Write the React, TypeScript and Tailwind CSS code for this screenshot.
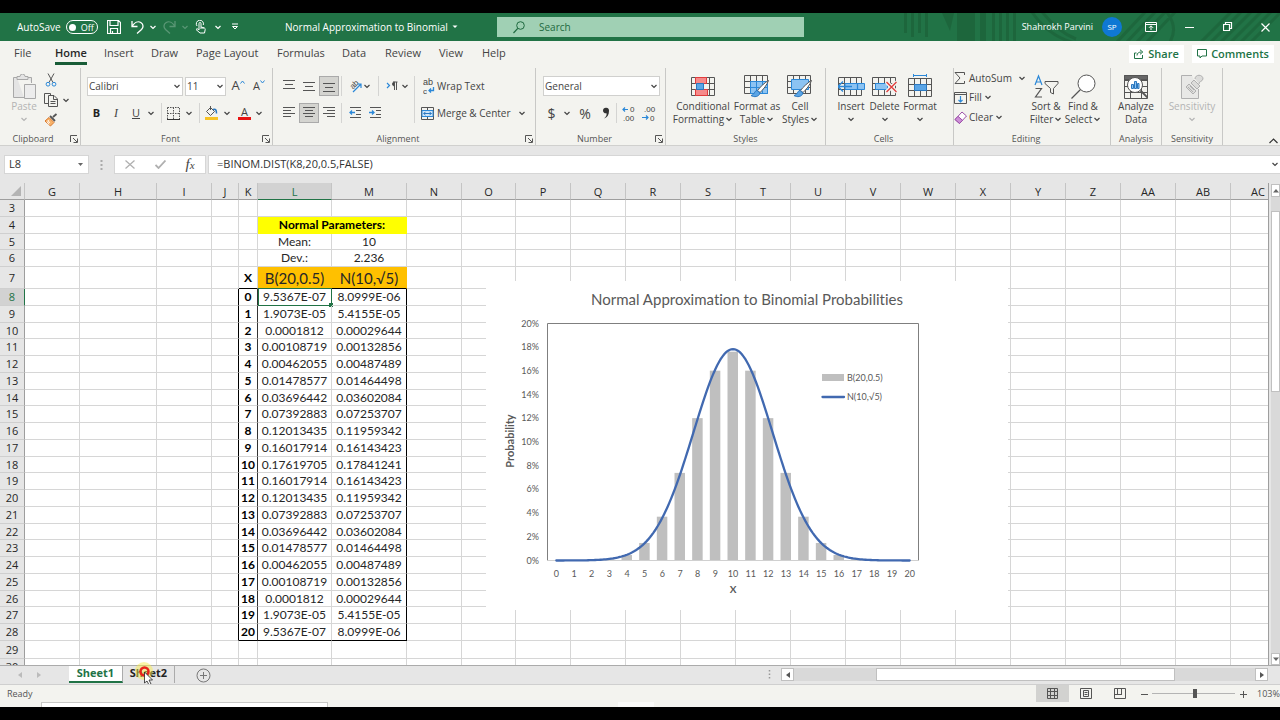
import React from "react";

/* ---------- data ---------- */

const COLUMNS: { name: string; width: string }[] = [
  { name: "G", width: "w-[55px]" },
  { name: "H", width: "w-[77px]" },
  { name: "I", width: "w-[55px]" },
  { name: "J", width: "w-[27px]" },
  { name: "K", width: "w-[19px]" },
  { name: "L", width: "w-[74px]" },
  { name: "M", width: "w-[75px]" },
  { name: "N", width: "w-[55px]" },
  { name: "O", width: "w-[54px]" },
  { name: "P", width: "w-[55px]" },
  { name: "Q", width: "w-[55px]" },
  { name: "R", width: "w-[55px]" },
  { name: "S", width: "w-[55px]" },
  { name: "T", width: "w-[55px]" },
  { name: "U", width: "w-[55px]" },
  { name: "V", width: "w-[55px]" },
  { name: "W", width: "w-[55px]" },
  { name: "X", width: "w-[55px]" },
  { name: "Y", width: "w-[55px]" },
  { name: "Z", width: "w-[55px]" },
  { name: "AA", width: "w-[55px]" },
  { name: "AB", width: "w-[55px]" },
  { name: "AC", width: "w-[55px]" },
];

const PAIRS: [string, string][] = [
  ["9.5367E-07", "8.0999E-06"],
  ["1.9073E-05", "5.4155E-05"],
  ["0.0001812", "0.00029644"],
  ["0.00108719", "0.00132856"],
  ["0.00462055", "0.00487489"],
  ["0.01478577", "0.01464498"],
  ["0.03696442", "0.03602084"],
  ["0.07392883", "0.07253707"],
  ["0.12013435", "0.11959342"],
  ["0.16017914", "0.16143423"],
  ["0.17619705", "0.17841241"],
];

const ROWS = Array.from({ length: 28 }, (_, i) => i + 3);

function rowHeight(r: number) {
  if (r === 7) return "h-[22px]";
  if (r === 29) return "h-[18px]";
  if (r === 5 || (r > 8 && r % 4 === 2)) return "h-[16px]";
  return "h-[17px]";
}

function cellValue(r: number, c: string): string {
  if (r === 5) return c === "L" ? "Mean:" : c === "M" ? "10" : "";
  if (r === 6) return c === "L" ? "Dev.:" : c === "M" ? "2.236" : "";
  if (r === 7) return c === "K" ? "X" : c === "L" ? "B(20,0.5)" : c === "M" ? "N(10,√5)" : "";
  if (r >= 8 && r <= 28) {
    const k = r - 8;
    const pair = PAIRS[k <= 10 ? k : 20 - k];
    return c === "K" ? String(k) : c === "L" ? pair[0] : c === "M" ? pair[1] : "";
  }
  return "";
}

function cellStyle(r: number, c: string): string {
  const inBox = r >= 8 && r <= 28;
  let right = "border-r border-r-[#d6d6d6]";
  let bottom = "border-b border-b-[#d6d6d6]";
  let extra = "";
  if (inBox && (c === "J" || c === "M")) right = "border-r border-r-black";
  if (inBox && c === "K") right = "border-r border-r-[#333]";
  if ((r === 28 || r === 7) && (c === "K" || c === "L" || c === "M")) bottom = "border-b border-b-black";
  if (c === "K") extra = "font-bold text-black";
  if (r === 7 && (c === "L" || c === "M")) {
    extra = "bg-[#ffc000] text-[15px]";
    right = "border-r border-r-[#ffc000]";
  }
  return right + " " + bottom + " " + extra;
}

/* ---------- small pieces ---------- */

type SvgProps = { w: number; h: number; children: React.ReactNode; className?: string };
function Svg({ w, h, children, className }: SvgProps) {
  return (
    <svg width={w} height={h} viewBox={`0 0 ${w} ${h}`} fill="none" stroke="#555" strokeWidth="1" className={"shrink-0 " + (className ?? "")} aria-hidden="true">
      {children}
    </svg>
  );
}

function IconText({ x, y, size = 8, children, transform }: { x: number; y: number; size?: number; children: string; transform?: string }) {
  return (
    <text x={x} y={y} fontSize={size} fontFamily="'Liberation Sans', sans-serif" fill="#444" stroke="none" transform={transform}>
      {children}
    </text>
  );
}

function Chev({ className, color = "#444" }: { className?: string; color?: string }) {
  return (
    <Svg w={8} h={5} className={className}>
      <path d="M1.5 1 4 3.5 6.500 1" stroke={color} strokeWidth="1.2" />
    </Svg>
  );
}

function Btn({ label, className, children }: { label: string; className: string; children: React.ReactNode }) {
  return (
    <button type="button" aria-label={label} className={"flex h-5 shrink-0 items-center justify-center " + className}>
      {children}
    </button>
  );
}

function Sep({ className }: { className: string }) {
  return <div className={"h-5 w-px shrink-0 bg-[#d4d4d2] " + className} />;
}

function Launcher() {
  return (
    <button type="button" aria-label="More options" className="absolute right-[2px] bottom-[2px]">
      <Svg w={8} h={8}>
        <path d="M.5 7V.5H7M3 3l4 4M7.500 3.500v4h-4" />
      </Svg>
    </button>
  );
}

function Group({ name, className, launcher, offset, children }: { name: string; className: string; launcher?: boolean; offset?: boolean; children: React.ReactNode }) {
  return (
    <section aria-label={name} className={"relative flex h-[77px] shrink-0 flex-col justify-between border-r border-[#c8c8c6] " + className}>
      {children}
      <div className={"text-center text-[9px] leading-3 text-[#555] " + (launcher || offset ? "pr-3" : "")}>{name}</div>
      {launcher && <Launcher />}
    </section>
  );
}

function BigButton({ lines, className, chevron, children, disabled }: { lines: string[]; className: string; chevron?: "own" | "inline"; children: React.ReactNode; disabled?: boolean }) {
  return (
    <button type="button" className={"flex shrink-0 flex-col items-center " + className + (disabled ? " text-[#b4b4b4]" : " text-[#444]")}>
      <span className="flex h-[28px] items-center">{children}</span>
      {lines.map((l, i) => (
        <span key={l} className="flex h-[13px] items-center gap-px text-[10px] leading-[13px] whitespace-nowrap">
          {l}
          {chevron === "inline" && i === lines.length - 1 && <Chev />}
        </span>
      ))}
      {chevron === "own" && (
        <span className="flex h-[13px] items-center">
          <Chev color={disabled ? "#b4b4b4" : "#444"} />
        </span>
      )}
    </button>
  );
}

function Lines({ rows, arrow }: { rows: [number, number, number][]; arrow?: "left" | "right" }) {
  return (
    <Svg w={13} h={14}>
      {rows.map(([x1, x2, y]) => (
        <path key={y} d={`M${x1} ${y}.5H${x2}`} />
      ))}
      {arrow === "left" && <path d="M6 6.500H1M3 4.500l-2 2 2 2" stroke="#2b88d8" strokeWidth="1.3" />}
      {arrow === "right" && <path d="M0 6.500h5M3 4.500l2 2-2 2" stroke="#2b88d8" strokeWidth="1.3" />}
    </Svg>
  );
}

function GridLines() {
  return <path d="M.5.5h23v18H.5zM.5 6.500h23M.5 12.500h23M6.500.5v18M12.500.5v18M18.500.5v18" />;
}

function Brush() {
  return (
    <g>
      <path d="M24.500 5.500c-3 1.500-9 7-11 10l2.500 2c3-2.500 7.500-8.500 8.500-12z" fill="#fff" stroke="#555" />
      <path d="M13 15.500c-3 .5-2 4-6 5 3 2 8 1.500 9-2.500z" fill="#5aa5e6" stroke="#2b78c0" />
    </g>
  );
}

/* ---------- title bar ---------- */

function TitleBar() {
  return (
    <header className="relative flex h-7 shrink-0 items-center overflow-hidden bg-[#217346] text-[10px] text-white">
      <svg className="absolute top-0 right-0" width="390" height="28" viewBox="0 0 390 28" aria-hidden="true">
        <g fill="#1c6239" opacity=".75">
          <path d="M14 0h3v20h-3zM21 0h3v24h-3zM28 0h3v20h-3zM35 0h3v24h-3zM52 0h12l-4 18zM67 0h18v28H67zM90 0h6v28h-6zM102 0h3v28h-3zM109 0h3v28h-3zM116 0h3v28h-3zM123 0h3v28h-3z" />
        </g>
        <g stroke="#1c6239" strokeWidth="3" fill="none" opacity=".7">
          <path d="M140-4q16 26 44 34M150-4q16 22 36 30M226 30 256-2M236 30l30-32M246 30l30-32M256 30l30-32M276-2q14 18 2 34M310 30 342-2M320 30l32-32M330 30l32-32M340 30l32-32M350 30l32-32M360 30l32-32" />
        </g>
      </svg>
      <div className="relative flex w-full items-center">
        <div className="flex w-[280px] items-center pl-[17px]">
          <label className="flex items-center gap-[5px]">
            <span>AutoSave</span>
            <input type="checkbox" className="peer sr-only" />
            <span className="flex h-[14px] w-8 items-center gap-[5px] rounded-full border border-white pl-[2px] text-[9px] leading-none">
              <span className="h-[7px] w-[7px] rounded-full bg-white" />
              Off
            </span>
          </label>
          <button type="button" aria-label="Save" className="ml-[9px]">
            <Svg w={14} h={14}>
              <path d="M.5.5h11l2 2v11H.5zM3 .5v5h8v-5M3.500 13.500v-5h7v5M5.500 11v2.500" stroke="#fff" strokeWidth="1.200" />
            </Svg>
          </button>
          <button type="button" aria-label="Undo" className="ml-[10px] flex items-center gap-[5px]">
            <Svg w={13} h={14}>
              <path d="M1 1v5.500h5.500M1 6.500C3.500 2.500 7 .8 9.800 2.500c3 2 2.700 5 .7 7L6 13.500" stroke="#fff" strokeWidth="1.300" />
            </Svg>
            <Chev color="#fff" />
          </button>
          <button type="button" aria-label="Redo" disabled className="ml-[6px] flex items-center gap-[5px] opacity-25">
            <Svg w={13} h={14}>
              <path d="M12 1v5.500H6.500M12 6.500C9.500 2.500 6 .8 3.200 2.500c-3 2-2.700 5-.7 7L7 13.500" stroke="#fff" strokeWidth="1.300" />
            </Svg>
            <Chev color="#fff" />
          </button>
          <button type="button" aria-label="Touch mode" className="ml-[6px] flex items-center gap-2">
            <Svg w={11} h={14}>
              <path d="M4 10V3.500a1 1 0 0 1 2 0V7l3 .8c1 .3 1.300.8 1.200 1.800L9.500 13H5L1 9.500c.8-1 2-.8 3 .5M2 6A3.600 3.600 0 1 1 8.300 5M6 7v2M8 7.500V9" stroke="#fff" />
            </Svg>
            <Chev color="#fff" />
          </button>
          <button type="button" aria-label="Customize toolbar" className="ml-[9px]">
            <Svg w={8} h={8}>
              <path d="M1 1h6M1.500 3.500 4 6l2.500-2.500z" stroke="#fff" />
            </Svg>
          </button>
        </div>
        <button type="button" className="flex w-[217px] items-center gap-[4px] pl-[5px] whitespace-nowrap">
          Normal Approximation to Binomial
          <Svg w={6} h={4}>
            <path d="M.5.500h5L3 3z" fill="#fff" stroke="none" />
          </Svg>
        </button>
        <label className="flex h-5 w-[307px] items-center gap-[14px] bg-[#a0d0b4] pl-4 text-[#1f6a40]">
          <Svg w={12} h={13}>
            <circle cx="7.500" cy="4.500" r="3.800" stroke="#1f6a40" />
            <path d="M4.800 7.300.5 12" stroke="#1f6a40" strokeWidth="1.200" />
          </Svg>
          <input type="search" aria-label="Search" placeholder="Search" className="min-w-0 flex-1 bg-transparent outline-none placeholder:text-[#1f6a40]" />
        </label>
        <div className="ml-auto flex items-center">
          <span className="text-[9px]">Shahrokh Parvini</span>
          <span className="ml-[9px] flex h-5 w-5 items-center justify-center rounded-full bg-[#0f78d4] text-[8px]">SP</span>
          <button type="button" aria-label="Ribbon display options" className="ml-[23px]">
            <Svg w={12} h={10}>
              <path d="M.5.5h11v9H.5zM.5 2.500h11M6 8V4M4 5.800l2-2 2 2" stroke="#fff" />
            </Svg>
          </button>
          <button type="button" aria-label="Minimize" className="ml-[28px]">
            <Svg w={10} h={10}>
              <path d="M0 5.500h9" stroke="#fff" />
            </Svg>
          </button>
          <button type="button" aria-label="Restore" className="ml-[28px]">
            <Svg w={10} h={10}>
              <path d="M.5 2.500h6v6h-6zM2.500 2.500v-2h6v6h-2" stroke="#fff" strokeWidth="1.200" />
            </Svg>
          </button>
          <button type="button" aria-label="Close" className="mr-[10px] ml-[28px]">
            <Svg w={9} h={9}>
              <path d="m.5.5 8 8M8.500.5l-8 8" stroke="#fff" strokeWidth="1.200" />
            </Svg>
          </button>
        </div>
      </div>
    </header>
  );
}

/* ---------- ribbon tabs ---------- */

function RibbonTabs() {
  const tab = "flex h-6 items-end border-b-[3px] pb-px text-left leading-4 whitespace-nowrap ";
  const names: [string, string][] = [
    ["File", "w-[41px]"],
    ["Home", "w-[49px]"],
    ["Insert", "w-[47px]"],
    ["Draw", "w-[45px]"],
    ["Page Layout", "w-[81px]"],
    ["Formulas", "w-[65px]"],
    ["Data", "w-[43px]"],
    ["Review", "w-[54px]"],
    ["View", "w-[43px]"],
    ["Help", "w-[40px]"],
  ];
  return (
    <nav className="flex h-[27px] shrink-0 items-start bg-[#f3f3ef] pl-[14px] text-[11px] text-[#444]">
      {names.map(([n, w]) => (
        <div key={n} className={w}>
          <button type="button" className={tab + (n === "Home" ? "border-[#185c37] font-semibold text-[#262626]" : "border-transparent")}>
            {n}
          </button>
        </div>
      ))}
      <div className="mt-1 mr-[6px] ml-auto flex gap-2 text-[11px] font-semibold text-[#217346]">
        <button type="button" className="flex h-[18px] w-[55px] items-center justify-center gap-1 bg-white">
          <Svg w={10} h={10}>
            <path d="M2.500 4h-2v5.500h8V6M3 6.500C3 4 5 3 7.500 3M6 .8 8.800 3 6 5.300" stroke="#217346" />
          </Svg>
          Share
        </button>
        <button type="button" className="flex h-[18px] w-[82px] items-center justify-center gap-1 bg-white">
          <Svg w={10} h={10}>
            <path d="M.5.500h9v6.500H5L3 9V7H.5z" stroke="#217346" />
          </Svg>
          Comments
        </button>
      </div>
    </nav>
  );
}

/* ---------- ribbon ---------- */

function Ribbon() {
  return (
    <div className="flex h-[78px] shrink-0 items-start border-b border-[#d0d0ce] bg-[#f3f3ef] text-[10px] text-[#444]">
      <Group name="Clipboard" className="w-[81px] pr-[2px]" launcher>
        <div className="flex pl-2">
          <BigButton lines={["Paste"]} className="w-8 pt-1" chevron="own" disabled>
            <Svg w={24} h={25}>
              <path d="M5 3.500H1.500v20H12M16 3.500h3.500V9M5 5.500v-3h3a2.500 2.500 0 0 1 5 0h3v3z" stroke="#a8a8a8" fill="#e4e4e4" />
              <path d="M12.500 10.500h11v14h-11z" stroke="#a8a8a8" fill="#ececec" />
            </Svg>
          </BigButton>
          <div className="flex flex-col pt-[2px] pl-1">
            <Btn label="Cut" className="w-[14px]">
              <Svg w={12} h={14}>
                <path d="m3 .5 5 9M9 .5l-5 9" />
                <circle cx="3" cy="11.200" r="1.900" stroke="#2b88d8" />
                <circle cx="9" cy="11.200" r="1.900" stroke="#2b88d8" />
              </Svg>
            </Btn>
            <Btn label="Copy" className="w-[26px] gap-1">
              <Svg w={14} h={14}>
                <path d="M4.500 10.500h-4V.5h6v2M4.500 2.500h5.500l3.500 3.500v7.500h-9zM9.500 2.500v4h4M6.500 8.500h5M6.500 10.500h5" />
              </Svg>
              <Chev />
            </Btn>
            <Btn label="Format Painter" className="w-[14px]">
              <Svg w={14} h={14}>
                <path d="m9 4 3.500-3M6 3l5 5" strokeWidth="1.800" />
                <path d="m5 4.500 5 5L6.500 13 1 8z" fill="#f7b26a" stroke="#d9772b" />
                <path d="m4 7 1.500 3M3 8.500l2 3" stroke="#fff" />
              </Svg>
            </Btn>
          </div>
        </div>
      </Group>

      <Group name="Font" className="w-[192px]" launcher>
        <div className="flex flex-col gap-[7px] pt-2 pl-[6px]">
          <div className="flex items-center">
            <span className="relative flex h-[19px] w-24 items-center border border-[#d0d0ce] bg-white">
              <select aria-label="Font name" className="w-full appearance-none bg-transparent pl-[1px] outline-none"><option>Calibri</option></select>
              <Chev className="absolute right-[1px]" />
            </span>
            <span className="relative ml-[2px] flex h-[19px] w-[41px] items-center border border-[#d0d0ce] bg-white">
              <select aria-label="Font size" className="w-full appearance-none bg-transparent pl-[1px] outline-none"><option>11</option></select>
              <Chev className="absolute right-[1px]" />
            </span>
            <Btn label="Increase font size" className="ml-[5px] w-[14px] items-start text-[13px] leading-[18px]">
              A<Svg w={5} h={4} className="mt-1"><path d="m.5 3.500 2-2.500 2 2.500" stroke="#2b88d8" /></Svg>
            </Btn>
            <Btn label="Decrease font size" className="ml-[7px] w-[14px] items-start text-[11px] leading-5">
              A<Svg w={5} h={4} className="mt-1"><path d="m.5.500 2 2.500 2-2.500" stroke="#2b88d8" /></Svg>
            </Btn>
          </div>
          <div className="flex items-center">
            <Btn label="Bold" className="w-[19px] text-[11px] font-bold text-[#222]">B</Btn>
            <Btn label="Italic" className="w-5 font-['Liberation_Serif',serif] text-[12px] italic">I</Btn>
            <Btn label="Underline" className="w-5 text-[11px] underline">U</Btn>
            <Btn label="Underline options" className="w-[10px]"><Chev /></Btn>
            <Sep className="mx-[5px]" />
            <Btn label="Borders" className="w-[13px]">
              <Svg w={13} h={13}>
                <path d="M.5.5h12v12M.5.500v12M6.500.5v12M.5 6.500h12" strokeDasharray="1.500 1" />
                <path d="M0 12.500h13" stroke="#333" />
              </Svg>
            </Btn>
            <Btn label="Border options" className="ml-[4px] w-[10px]"><Chev /></Btn>
            <Sep className="mx-[5px]" />
            <Btn label="Fill color" className="w-[13px]">
              <Svg w={13} h={14}>
                <path d="m5.500 1.500 4 4-4 4-4-4zM5.500 4V0" />
                <path d="M8 3.500c3-1 3.500 1 3.500 4" stroke="#2b78c0" strokeWidth="1.500" />
                <path d="M0 11h13v3H0z" fill="#f7c325" stroke="none" />
              </Svg>
            </Btn>
            <Btn label="Fill options" className="ml-[4px] w-[10px]"><Chev /></Btn>
            <Btn label="Font color" className="ml-[6px] w-[13px] flex-col text-[11px] leading-[11px]">
              A
              <span className="h-[3px] w-full bg-[#e81313]" />
            </Btn>
            <Btn label="Font color options" className="ml-[3px] w-[10px]"><Chev /></Btn>
          </div>
        </div>
      </Group>

      <Group name="Alignment" className="w-[263px]" launcher>
        <div className="flex pt-2 pl-[6px]">
          <div className="flex flex-col gap-[7px]">
            <div className="flex items-center">
              <Btn label="Top align" className="w-5"><Lines rows={[[0, 12, 1], [2, 10, 5], [0, 12, 9]]} /></Btn>
              <Btn label="Middle align" className="w-5"><Lines rows={[[0, 12, 3], [2, 10, 7], [0, 12, 11]]} /></Btn>
              <Btn label="Bottom align" className="w-5 border border-[#aaa] bg-[#d4d4d0]"><Lines rows={[[0, 12, 4], [2, 10, 8], [0, 12, 12]]} /></Btn>
              <Sep className="mr-[6px] ml-[2px]" />
              <Btn label="Orientation" className="w-[14px]">
                <Svg w={16} h={18}>
                  <IconText x={4} y={10} transform="rotate(-45 8 9)">ab</IconText>
                  <path d="m6 15 8-8M10 7h4v4" stroke="#2b88d8" strokeWidth="1.200" />
                </Svg>
              </Btn>
              <Btn label="Orientation options" className="w-[10px]"><Chev /></Btn>
              <Sep className="mx-[6px]" />
              <Btn label="Text direction" className="w-[14px]">
                <Svg w={12} h={10}>
                  <path d="m1 2 2.500 2.500L1 7" stroke="#2b88d8" strokeWidth="1.200" />
                  <path d="M8.500 9V1M10.500 9V1M7 1h4.500" />
                  <path d="M8.500 1a2 2 0 0 0 0 4z" fill="#444" />
                </Svg>
              </Btn>
              <Btn label="Direction options" className="ml-[1px] w-[10px]"><Chev /></Btn>
            </div>
            <div className="flex items-center">
              <Btn label="Align left" className="w-5"><Lines rows={[[0, 12, 1], [0, 8, 4], [0, 12, 7], [0, 8, 10]]} /></Btn>
              <Btn label="Center" className="w-5 border border-[#aaa] bg-[#d4d4d0]"><Lines rows={[[0, 12, 1], [2, 10, 4], [0, 12, 7], [2, 10, 10]]} /></Btn>
              <Btn label="Align right" className="w-5"><Lines rows={[[0, 12, 1], [4, 12, 4], [0, 12, 7], [4, 12, 10]]} /></Btn>
              <Sep className="mr-[6px] ml-[2px]" />
              <Btn label="Decrease indent" className="w-[14px]"><Lines arrow="left" rows={[[1, 12, 1], [7, 12, 4], [7, 12, 8], [1, 12, 11]]} /></Btn>
              <Btn label="Increase indent" className="ml-[6px] w-[14px]"><Lines arrow="right" rows={[[1, 12, 1], [7, 12, 4], [7, 12, 8], [1, 12, 11]]} /></Btn>
            </div>
          </div>
          <div className="ml-1 h-[47px] w-px bg-[#d4d4d2]" />
          <div className="ml-[6px] flex flex-col gap-[7px]">
            <button type="button" className="flex h-5 items-center gap-[2px] pl-[2px] whitespace-nowrap">
              <Svg w={12} h={20}>
                <IconText x={0} y={9} size={9}>ab</IconText>
                <IconText x={0} y={18} size={8}>c</IconText>
                <path d="M10.500 11v3.500H6M8 12.500l-2 2 2 2" stroke="#2b88d8" strokeWidth="1.300" />
              </Svg>
              Wrap Text
            </button>
            <button type="button" className="flex h-5 items-center gap-[3px] whitespace-nowrap">
              <Svg w={13} h={13}>
                <path d="M.5.5h12v12H.5zM6.500.5v3M6.500 9.500v3" />
                <path d="M1 3.500h11v6H1z" fill="#cfe5f8" stroke="#2b88d8" />
                <path d="M2.500 6.500h8M4.500 4.800 2.800 6.500l1.700 1.700M8.500 4.800l1.700 1.700-1.700 1.700" stroke="#2b78c0" />
              </Svg>
              Merge &amp; Center
              <Chev className="ml-1" />
            </button>
          </div>
        </div>
      </Group>

      <Group name="Number" className="w-[130px]" launcher>
        <div className="flex flex-col gap-[7px] pt-2 pr-[5px] pl-[7px]">
          <span className="relative flex h-5 items-center border border-[#d0d0ce] bg-white">
            <select aria-label="Number format" className="w-full appearance-none bg-transparent pl-[1px] outline-none"><option>General</option></select>
            <Chev className="absolute right-[1px]" />
          </span>
          <div className="flex items-center">
            <Btn label="Accounting format" className="w-[17px] text-[14px]">$</Btn>
            <Btn label="Currency options" className="w-[14px]"><Chev /></Btn>
            <Btn label="Percent" className="ml-[4px] w-[14px] text-[14px]">%</Btn>
            <Btn label="Comma style" className="ml-[8px] w-[12px]">
              <Svg w={8} h={12}>
                <path d="M1 3.500a3 3 0 1 1 6 .5c0 4-2 6.500-5 7.500 2-1.500 3-3.500 2.500-5.200C2.500 6.500 1 5.500 1 3.500z" fill="#333" stroke="none" />
              </Svg>
            </Btn>
            <Sep className="mx-[4px]" />
            <Btn label="Increase decimal" className="ml-[1px] w-[14px]">
              <Svg w={14} h={20}>
                <path d="M6 6.500H1M3 4.500l-2 2 2 2" stroke="#2b88d8" strokeWidth="1.200" />
                <IconText x={8} y={9}>0</IconText>
                <IconText x={1} y={18}>.00</IconText>
              </Svg>
            </Btn>
            <Btn label="Decrease decimal" className="ml-[6px] w-[14px]">
              <Svg w={14} h={20}>
                <IconText x={2} y={9}>.00</IconText>
                <IconText x={8} y={18}>0</IconText>
                <path d="M0 14.500h6M4 12.500l2 2-2 2" stroke="#2b88d8" strokeWidth="1.200" />
              </Svg>
            </Btn>
          </div>
        </div>
      </Group>

      <Group name="Styles" className="w-40">
        <div className="flex pt-1 pl-[7px]">
          <BigButton lines={["Conditional", "Formatting"]} className="w-[60px]" chevron="inline">
            <Svg w={24} h={19}>
              <GridLines />
              <path d="M4.500.5h11v6h-11zM4.500 12.500h12v6h-12z" fill="#f58a8a" stroke="#e03c3c" />
              <path d="M5.500 6.500h7v6h-7z" fill="#5aa5e6" stroke="#2b78c0" />
            </Svg>
          </BigButton>
          <BigButton lines={["Format as", "Table"]} className="w-12" chevron="inline">
            <Svg w={26} h={23}>
              <GridLines />
              <path d="M6.500 6.500h17v12h-17z" fill="#8cc3f2" stroke="#2b88d8" />
              <path d="M12.500 6.500v12M18.500 6.500v12M6.500 12.500h17" stroke="#2b88d8" />
              <Brush />
            </Svg>
          </BigButton>
          <BigButton lines={["Cell", "Styles"]} className="w-[38px]" chevron="inline">
            <Svg w={26} h={23}>
              <GridLines />
              <path d="M4.500 4.500h17v10h-17z" fill="#8cc3f2" stroke="#2b88d8" />
              <Brush />
            </Svg>
          </BigButton>
        </div>
      </Group>

      <Group name="Cells" className="w-32" offset>
        <div className="flex justify-between pt-1 pr-4 pl-[10px]">
          <BigButton lines={["Insert"]} className="w-[30px]" chevron="own">
            <Svg w={27} h={19}>
              <GridLines />
              <path d="M7 6.500h19.500v6H7z" fill="#8cc3f2" stroke="#2b88d8" />
              <path d="M19.500 6.500v6M0 9.500h14M5 4.500l-5 5 5 5" stroke="#2b88d8" strokeWidth="1.300" />
            </Svg>
          </BigButton>
          <BigButton lines={["Delete"]} className="w-[34px]" chevron="own">
            <Svg w={25} h={19}>
              <GridLines />
              <path d="M3.500 6.500h12v6h-12z" fill="#8cc3f2" stroke="#2b88d8" />
              <path d="m14.500 5 10 10M24.500 5l-10 10" stroke="#f3f3ef" strokeWidth="4" />
              <path d="m14.500 5 10 10M24.500 5l-10 10" stroke="#e03c3c" strokeWidth="1.300" />
            </Svg>
          </BigButton>
          <BigButton lines={["Format"]} className="w-[34px]" chevron="own">
            <Svg w={24} h={25}>
              <path d="M5.500 1.500h13M5.500 0v3M18.500 0v3" stroke="#2b88d8" />
              <g transform="translate(0 4)">
                <GridLines />
                <path d="M6.500 6.500h12v6h-12z" fill="#5aa5e6" stroke="#2b78c0" />
              </g>
            </Svg>
          </BigButton>
        </div>
      </Group>

      <Group name="Editing" className="w-[157px]" offset>
        <div className="flex">
          <div className="flex w-[74px] flex-col">
            <button type="button" className="flex h-5 items-center">
              <Svg w={12} h={12}><path d="M10.500 3V.5H1L6 6l-5 5.500h9.500V9" /></Svg>
              <span className="ml-[3px] w-[48px] text-left">AutoSum</span>
              <Chev className="ml-[1px]" />
            </button>
            <button type="button" className="flex h-[19px] items-center gap-[2px]">
              <Svg w={13} h={12}>
                <path d="M.5.5h12v11H.5zM.5 2.500h12" />
                <path d="M6.500 4v6M4.500 8l2 2 2-2" stroke="#2b88d8" strokeWidth="1.200" />
              </Svg>
              Fill <Chev />
            </button>
            <button type="button" className="flex h-5 items-center gap-[2px]">
              <Svg w={13} h={13}>
                <path d="m1 8.500 7-7.500 4.500 4-7 7.500z" fill="#fff" stroke="#9b4fa8" />
                <path d="m1 8.500 3-3.200 4.500 4-3 3.200z" fill="#cd8fd6" stroke="#9b4fa8" />
              </Svg>
              Clear <Chev />
            </button>
          </div>
          <BigButton lines={["Sort &", "Filter"]} className="w-9 pt-1" chevron="inline">
            <Svg w={25} h={25}>
              <path d="M1 11 4.500 2 8 11M2.300 8h4.500" stroke="#2b88d8" strokeWidth="1.200" />
              <path d="M1.500 14.500h6l-6 8.500h6.500" strokeWidth="1.200" />
              <path d="M11 7.500h13v2l-4.500 5V20l-3-1.500v-4L11 9.500z" />
            </Svg>
          </BigButton>
          <BigButton lines={["Find &", "Select"]} className="w-[38px] pt-1" chevron="inline">
            <Svg w={25} h={25}>
              <circle cx="15.500" cy="9.500" r="8.500" fill="#fff" />
              <path d="M9.500 15.500.5 24.500" strokeWidth="1.300" />
            </Svg>
          </BigButton>
        </div>
      </Group>

      <Group name="Analysis" className="w-[51px]">
        <BigButton lines={["Analyze", "Data"]} className="pt-1">
          <Svg w={24} h={25}>
            <path d="M.5 1.500h23v23H.5zM.5 6.500h23M.5 12.500h23M.5 18.500h23M6.500 6.500v18M17.500 6.500v18" />
            <path d="M.5 1.500h23v4H.5z" fill="#666" />
            <circle cx="11" cy="11" r="7.500" fill="#fff" />
            <path d="m16.500 16.500 7 7" strokeWidth="1.800" />
            <path d="M7.500 10.500h2v4h-2zM10.500 7.500h2v7h-2zM13.500 9.500h1.500v5h-1.500z" fill="#8cc3f2" stroke="#2b78c0" />
          </Svg>
        </BigButton>
      </Group>

      <Group name="Sensitivity" className="w-[61px]">
        <BigButton lines={["Sensitivity"]} className="pt-1" chevron="own" disabled>
          <Svg w={24} h={25}>
            <path d="M12 1.500H1.500v23h17V15" stroke="#b0b0b0" fill="#e8e8e6" />
            <path d="m6 13 3-3 7 7-3 3zM11 9l3-3 6 6-3 3zM15 5c0-5 8-5 8 0-1 3-4 2-4 5" stroke="#b0b0b0" fill="#dcdcda" />
            <path d="m8 13 5 5M10 12l4 4" stroke="#b0b0b0" />
          </Svg>
        </BigButton>
      </Group>

      <button type="button" aria-label="Collapse ribbon" className="mt-[70px] mr-[2px] ml-auto">
        <Svg w={9} h={6}><path d="m.5 5 4-4 4 4" stroke="#333" strokeWidth="1.200" /></Svg>
      </button>
    </div>
  );
}

/* ---------- formula bar ---------- */

function FormulaBar() {
  return (
    <div className="flex h-[37px] shrink-0 items-start bg-[#e6e6e6] pt-[9px] text-[10px] text-[#333]">
      <label className="ml-1 flex h-[19px] w-[85px] items-center border border-[#d6d6d6] bg-white pr-[5px] pl-[4px]">
        <input aria-label="Name box" defaultValue="L8" className="min-w-0 flex-1 bg-transparent text-[11px] outline-none" />
        <Svg w={5} h={3}><path d="M0 0h5L2.500 3z" fill="#666" stroke="none" /></Svg>
      </label>
      <Svg w={3} h={12} className="mx-[11px] mt-1">
        <path d="M1.500 1v10" strokeWidth="2" strokeDasharray="2 2" stroke="#aaa" />
      </Svg>
      <div className="flex h-[19px] w-[92px] items-center border border-[#d6d6d6] bg-white">
        <button type="button" aria-label="Cancel" className="flex w-[30px] justify-center">
          <Svg w={10} h={9}><path d="m.5.5 9 8M9.500.5l-9 8" stroke="#b0b0b0" strokeWidth="1.300" /></Svg>
        </button>
        <button type="button" aria-label="Enter" className="flex w-[30px] justify-center">
          <Svg w={11} h={9}><path d="m.5 5 3 3 7-7.500" stroke="#b0b0b0" strokeWidth="1.800" /></Svg>
        </button>
        <button type="button" aria-label="Insert function" className="w-[30px] text-center font-['Liberation_Serif',serif] text-[15px] leading-none text-[#444] italic">
          f<span className="text-[11px]">x</span>
        </button>
      </div>
      <label className="ml-[2px] flex h-[19px] flex-1 items-center border border-r-0 border-[#d6d6d6] bg-white pl-2">
        <input aria-label="Formula" defaultValue="=BINOM.DIST(K8,20,0.5,FALSE)" className="min-w-0 flex-1 bg-transparent text-[11px] outline-none" />
        <Chev className="mr-[1px]" />
      </label>
    </div>
  );
}

/* ---------- chart ---------- */

function Chart() {
  const left = 61.5;
  const top = 42.5;
  const width = 371;
  const height = 237;
  const slot = width / 21;
  const yOf = (p: number) => top + height * (1 - p / 0.2);
  const xOf = (k: number) => left + slot * (k + 0.5);
  const binom = Array.from({ length: 21 }, (_, k) => Number(PAIRS[k <= 10 ? k : 20 - k][0]));
  const curve = Array.from({ length: 201 }, (_, i) => {
    const k = i / 10;
    const p = Math.exp(-((k - 10) ** 2) / 10) / Math.sqrt(10 * Math.PI);
    return `${i ? "L" : "M"}${xOf(k).toFixed(2)} ${yOf(p).toFixed(2)}`;
  }).join("");
  return (
    <figure className="absolute top-[98px] left-[486px] bg-white">
      <svg width="522" height="329" viewBox="0 0 522 329" role="img" aria-label="Normal Approximation to Binomial Probabilities" fontFamily="Lato, 'Open Sans', sans-serif" fill="#595959" fontSize="9" className="[font-variant-ligatures:none]">
        <text x="261" y="24" fontSize="15" textAnchor="middle">Normal Approximation to Binomial Probabilities</text>
        {binom.map((p, k) => (
          <rect key={k} x={xOf(k) - 5.5} y={yOf(p)} width="10.500" height={top + height - yOf(p)} fill="#bfbfbf" />
        ))}
        <path d={`M${left} ${top + height}V${top}h${width}v${height}`} fill="none" stroke="#7f7f7f" />
        <path d={`M${left} ${top + height}h${width}`} stroke="#d0d0d0" />
        <path d={curve} fill="none" stroke="#4169b0" strokeWidth="2.300" strokeLinecap="round" />
        {binom.map((_, k) => (
          <text key={k} x={xOf(k)} y="296" textAnchor="middle">{k}</text>
        ))}
        {Array.from({ length: 11 }, (_, i) => (
          <text key={i} x="53" y={yOf(i * 0.02) + 3} textAnchor="end">{i * 2}%</text>
        ))}
        <text x="247" y="312" fontSize="10" fontWeight="bold" textAnchor="middle">X</text>
        <text x="28" y="160" fontSize="11" fontWeight="bold" textAnchor="middle" transform="rotate(-90 28 160)">Probability</text>
        <path d="M336 93h22v7h-22z" fill="#bfbfbf" />
        <path d="M336.500 116h21.500" stroke="#4169b0" strokeWidth="2.300" strokeLinecap="round" />
        <text x="361" y="100">B(20,0.5)</text>
        <text x="361" y="119">N(10,√5)</text>
      </svg>
    </figure>
  );
}

/* ---------- worksheet ---------- */

function Worksheet() {
  return (
    <div className="flex min-h-0 flex-1 bg-[#e6e6e6]">
      <div className="relative min-w-0 flex-1 overflow-hidden border-r border-[#9e9e9e] bg-white">
        <table className="w-[1281px] table-fixed border-separate border-spacing-0 text-[#262626]">
          <thead>
            <tr className="h-[17px] text-[11px] leading-[15px]">
              <th className="w-[25px] border-r border-b border-r-[#c4c4c4] border-b-[#9e9e9e] bg-[#e6e6e6] p-0">
                <Svg w={12} h={12} className="ml-auto mr-[2px]"><path d="M11 1v10H1z" fill="#b4b4b4" stroke="none" /></Svg>
              </th>
              {COLUMNS.map((c) => (
                <th
                  key={c.name}
                  scope="col"
                  className={"border-r border-b border-r-[#c4c4c4] p-0 font-normal " + c.width + (c.name === "L" ? " border-b-[#217346] bg-[#d2d2d2] text-[#217346]" : " border-b-[#9e9e9e] bg-[#e6e6e6]")}
                >
                  {c.name}
                </th>
              ))}
            </tr>
          </thead>
          <tbody className="font-['Lato','Open_Sans',sans-serif] text-[12px]">
            {ROWS.map((r) => (
              <tr key={r} className={rowHeight(r)}>
                <th
                  scope="row"
                  className={"border-b border-r border-b-[#cfcfcf] p-0 text-center font-['Open_Sans',sans-serif] text-[11px] leading-[14px] font-normal " + (r === 8 ? "border-r-[#217346] bg-[#d2d2d2] text-[#217346]" : "border-r-[#9e9e9e] bg-[#e6e6e6]")}
                >
                  {r}
                </th>
                {COLUMNS.map((c) => {
                  if (r === 4 && c.name === "L")
                    return (
                      <td key={c.name} colSpan={2} className="border-r border-b border-[#ffff00] bg-[#ffff00] p-0 text-center leading-[14px] font-bold text-black">
                        Normal Parameters:
                      </td>
                    );
                  if (r === 4 && c.name === "M") return null;
                  return (
                    <td key={c.name} className={"relative p-0 text-center leading-[14px] whitespace-nowrap " + cellStyle(r, c.name)}>
                      {cellValue(r, c.name)}
                      {r === 8 && c.name === "L" && (
                        <span className="pointer-events-none absolute -top-px -right-px -bottom-px left-0 border border-[#217346]">
                          <span className="absolute -right-[2px] -bottom-[2px] h-1 w-1 bg-[#217346]" />
                        </span>
                      )}
                    </td>
                  );
                })}
              </tr>
            ))}
          </tbody>
        </table>
        <Chart />
      </div>
      <div className="flex w-[11px] flex-col pl-[2px]">
        <button type="button" aria-label="Scroll up" className="mt-px flex h-[13px] items-center justify-center border border-[#c0c0c0] bg-white">
          <Svg w={6} h={4}><path d="M0 3.500h6L3 0z" fill="#666" stroke="none" /></Svg>
        </button>
        <div className="flex flex-1 flex-col bg-[#d9d9d9] pt-[14px]">
          <div className="h-[41%] border border-[#c0c0c0] bg-white" />
        </div>
        <button type="button" aria-label="Scroll down" className="flex h-3 items-center justify-center border border-[#c0c0c0] bg-white">
          <Svg w={6} h={4}><path d="M0 .500h6L3 4z" fill="#666" stroke="none" /></Svg>
        </button>
      </div>
    </div>
  );
}

/* ---------- bottom bars ---------- */

function SheetTabs() {
  return (
    <div className="relative flex h-[19px] shrink-0 border-t border-[#ababab] bg-[#e6e6e6] text-[11px] font-bold">
      <div className="flex w-[69px] items-center gap-[15px] pl-[18px]">
        <Svg w={4} h={6}><path d="M4 0v6L0 3z" fill="#bbb" stroke="none" /></Svg>
        <Svg w={4} h={6}><path d="M0 0v6l4-3z" fill="#bbb" stroke="none" /></Svg>
      </div>
      <button type="button" className="flex h-[17px] w-[54px] items-start justify-center border-r border-b-2 border-r-[#ababab] border-b-[#217346] bg-white leading-[13px] text-[#217346]">Sheet1</button>
      <button type="button" className="flex h-[17px] w-[52px] items-start justify-center border-r border-[#ababab] leading-[13px] text-[#222]">Sheet2</button>
      <button type="button" aria-label="New sheet" className="ml-[21px]">
        <Svg w={15} h={15}>
          <circle cx="7.500" cy="7.500" r="6.500" stroke="#777" />
          <path d="M4 7.500h7M7.500 4v7" stroke="#777" />
        </Svg>
      </button>
      <div className="absolute -top-1 left-[135px] h-[18px] w-[18px] rounded-full bg-[#f7ec4f]/50" />
      <svg className="absolute top-0 left-[138px]" width="16" height="20" viewBox="0 0 16 20" aria-hidden="true">
        <circle cx="6.500" cy="5.500" r="4" fill="none" stroke="#e8231b" strokeWidth="2.500" />
        <path d="M6.500 6v11l2.500-2 2 4 2-1-2-4h3.500z" fill="#fff" stroke="#222" strokeWidth=".8" />
      </svg>
      <div className="mt-[2px] mr-3 ml-auto flex h-[13px] w-[500px] items-stretch">
        <Svg w={3} h={9} className="mt-[2px] mr-[10px]"><path d="M1.500 0v9" strokeDasharray="1.500 2" strokeWidth="1.500" stroke="#999" /></Svg>
        <button type="button" aria-label="Scroll left" className="flex w-[13px] items-center justify-center border border-[#c0c0c0] bg-white">
          <Svg w={4} h={6}><path d="M4 0v6L0 3z" fill="#555" stroke="none" /></Svg>
        </button>
        <div className="flex flex-1 bg-[#d9d9d9] pl-[82px]">
          <div className="w-[299px] border border-[#c0c0c0] bg-white" />
        </div>
        <button type="button" aria-label="Scroll right" className="flex w-[13px] items-center justify-center border border-[#c0c0c0] bg-white">
          <Svg w={4} h={6}><path d="M0 0v6l4-3z" fill="#555" stroke="none" /></Svg>
        </button>
      </div>
    </div>
  );
}

function StatusBar() {
  return (
    <footer className="relative flex h-[23px] shrink-0 items-start border-t border-[#cfcfcf] bg-[#f3f3ef] text-[9px] text-[#555]">
      <span className="pt-[3px] pl-[7px] leading-3">Ready</span>
      <div className="absolute bottom-0 left-[41px] h-[5px] w-[287px] border border-b-0 border-[#c8c8c6] bg-white" />
      <div className="absolute bottom-0 left-[618px] h-[5px] w-9 bg-white/60" />
      <div className="ml-auto flex h-[17px] items-center">
        <button type="button" aria-label="Normal view" className="flex h-[17px] w-[33px] items-center justify-center bg-[#d2d2d0]">
          <Svg w={11} h={11}><path d="M.5.5h10v10H.5zM.5 3.500h10M.5 7.500h10M3.500.5v10M7.500.5v10" /></Svg>
        </button>
        <button type="button" aria-label="Page layout view" className="flex w-[34px] items-center justify-center">
          <Svg w={12} h={11}><path d="M.5.5h11v10H.5zM3.500 2.500h5v6h-5zM4.500 4.500h3M4.500 6.500h3" /></Svg>
        </button>
        <button type="button" aria-label="Page break view" className="flex w-[33px] items-center justify-center">
          <Svg w={12} h={11}><path d="M.5.5h11v10H.5zM3.500.5v6M7.500.5v6M0 6.500h8" /></Svg>
        </button>
        <button type="button" aria-label="Zoom out" className="ml-1 w-2"><Svg w={8} h={8}><path d="M1 4.500h7" /></Svg></button>
        <label className="relative mx-1 flex w-[83px] items-center">
          <span className="h-px w-full bg-[#b4b4b4]" />
          <input type="range" aria-label="Zoom" min="10" max="190" defaultValue="103" className="absolute inset-0 opacity-0" />
          <span className="absolute left-[41px] h-[9px] w-1 bg-[#555]" />
        </label>
        <button type="button" aria-label="Zoom in" className="w-2"><Svg w={8} h={8}><path d="M1 4.500h7M4.500 1v7" /></Svg></button>
        <span className="w-[33px] pl-[10px] text-[9px]">103%</span>
      </div>
    </footer>
  );
}

export default function App() {
  return (
    <div className="flex h-screen flex-col overflow-hidden bg-black py-[13px] font-['Open_Sans','Noto_Sans',sans-serif]">
      <TitleBar />
      <RibbonTabs />
      <Ribbon />
      <FormulaBar />
      <Worksheet />
      <SheetTabs />
      <StatusBar />
    </div>
  );
}
